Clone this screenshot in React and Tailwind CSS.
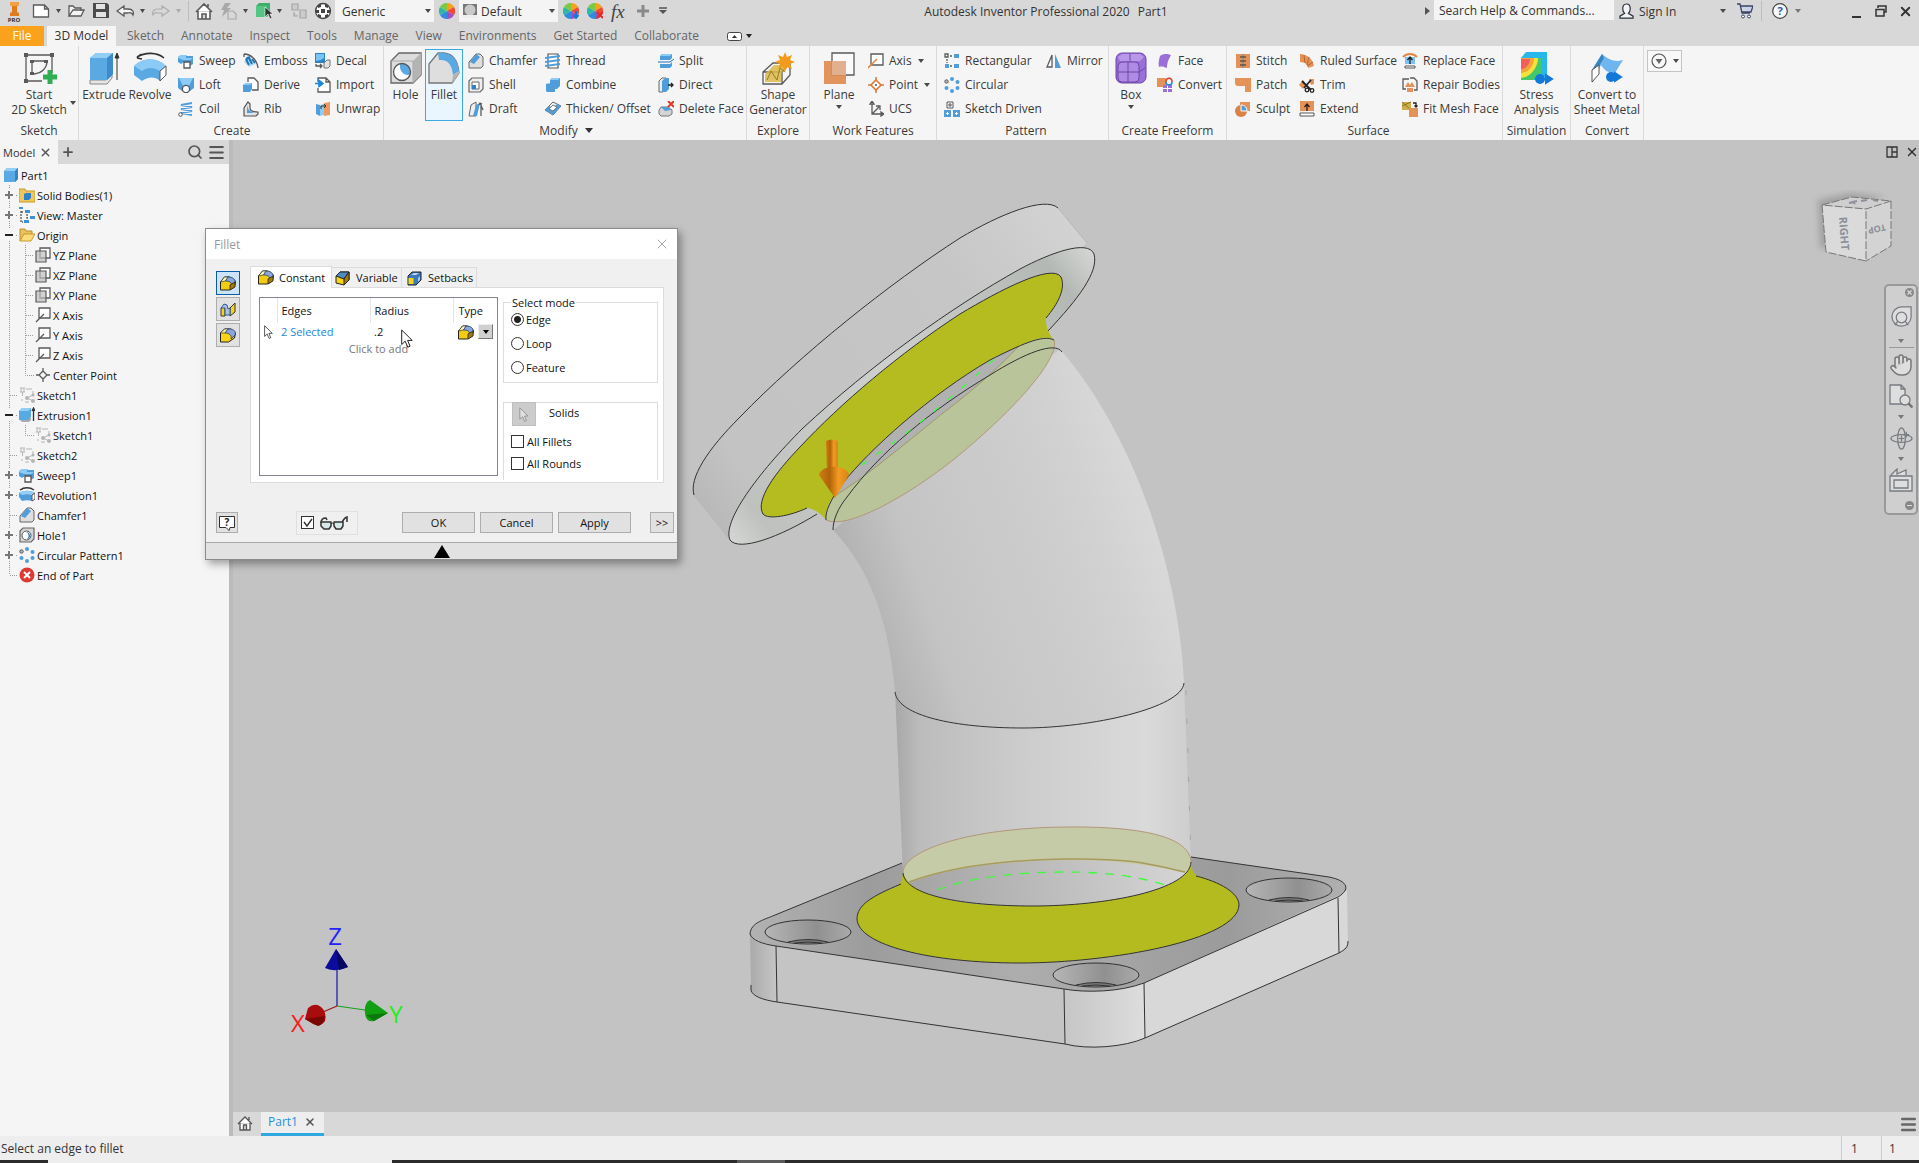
import { useState } from 'react';
import { X, Plus, Search, Menu, Hand } from 'lucide-react';

const line = { fill: 'none', stroke: '#5a5a5a', strokeWidth: 1.3 };

/* 16x16 ribbon and browser icons */
const icons = {
    sweep: (
        <>
            <path d="M0 4l3-2h5l1 1h6v8l-3 2H6v-4l-3 2L0 9z" fill="#4f9edb" />
            <path d="M0 4l3-2h5v3h7l-3 2H5L0 5z" fill="#8ccbf5" />
            <path d="M6 9h6v6H6z" fill="#fff" stroke="#555" strokeWidth="1.3" />
        </>
    ),
    loft: (
        <>
            <path d="M0 1h16v10l-4 3H4L0 11z" fill="#4f9edb" />
            <path d="M1 1h14l-4 8H5z" fill="#8ccbf5" />
            <circle cx="8" cy="12" r="3.6" fill="#fff" stroke="#555" strokeWidth="1.3" />
        </>
    ),
    coil: (
        <>
            <path d="M14 2L3 4l11 2L3 8l11 2L3 12l11 2" fill="none" stroke="#4f9edb" strokeWidth="2" />
            <circle cx="2.5" cy="13.5" r="1.8" fill="#fff" stroke="#555" />
        </>
    ),
    emboss: (
        <>
            <path d="M1 1c7 0 13 6 14 14M1 1v3" {...line} />
            <path d="M1 9l5 5 7-3C11 7 8 4 4 3z" fill="#b9dcf5" />
            <path d="M3 6l3 6M6 5l3 6M9 6l3 4M3 6l4-2" stroke="#1f74b8" strokeWidth="2" fill="none" />
        </>
    ),
    derive: (
        <>
            <path d="M5 5V1h6l4 4v8H9" {...line} fill="#fff" />
            <path d="M0 8l3-2h6v6l-2 3H0z" fill="#4f9edb" />
            <path d="M0 8l3-2h6L7 8z" fill="#8ccbf5" />
        </>
    ),
    rib: (
        <>
            <path d="M1 15V7l4-6 2 2v4c0 3 3 4 8 4v2l-2 2z" fill="#e3e3e3" stroke="#555" strokeWidth="1.2" />
            <path d="M4 4c1 5 3 7 8 8H4z" fill="#4f9edb" />
        </>
    ),
    decal: (
        <>
            <path d="M0 0h10v10H0z" fill="#2f82c8" />
            <path d="M1 1h8v4l-3 2-5 1z" fill="#7cc3f2" />
            <path d="M9 10l3-3h3v6l-2 2H9z" fill="#e3e3e3" stroke="#777" />
            <path d="M1 11v2h6M5 11l2 2-2 2" {...line} />
        </>
    ),
    import: (
        <>
            <path d="M3 5V1h8l4 4v10H3v-4M11 1v4h4" {...line} fill="#fff" />
            <path d="M0 6.5h6M4 3.5l4 3-4 3z" stroke="#1b87d8" strokeWidth="1.6" fill="#1b87d8" />
        </>
    ),
    unwrap: (
        <>
            <path d="M1 3l4 1v11l-4-2z" fill="#4f9edb" />
            <path d="M5 4l4-1v11l-4 1z" fill="#8ccbf5" />
            <path d="M9 2l6-1v13l-6 1z" fill="#ec9a62" />
            <path d="M6 8V5h5M9 3l2 2-2 2" fill="none" stroke="#333" />
        </>
    ),
    chamfer: (
        <>
            <path d="M1 14V9L8 1h4l3 3v9l-2 2H1z" fill="#dedede" stroke="#666" />
            <path d="M2 9l6-8 4 3-6 7z" fill="#4f9edb" />
        </>
    ),
    shell: (
        <>
            <path d="M1 4l3-3h11v11l-3 3H1z" fill="#eee" stroke="#666" strokeWidth="1.2" />
            <path d="M4 5h7v7H4z" fill="#fff" stroke="#666" />
            <path d="M4 8h4v4H4z" fill="#2f82c8" />
        </>
    ),
    draft: (
        <>
            <path d="M1 15l2-11 5-3v14z" fill="#eee" stroke="#666" />
            <path d="M5 15L8 4l4-2-3 13z" fill="#4f9edb" />
            <path d="M13 15V4M15 9l-3-7M11 4l1-2 2 1" {...line} />
        </>
    ),
    thread: (
        <>
            <path d="M3 1h10v14H3z" fill="#fff" stroke="#555" strokeWidth="1.2" />
            <path d="M0 5l15-2M0 9l15-2M0 13l15-2" stroke="#4f9edb" strokeWidth="2" />
        </>
    ),
    combine: (
        <>
            <path d="M5 3l2-2h8v8l-3 3h-2v3H2l-1-1V7h4z" fill="#4f9edb" />
            <path d="M5 3l2-2h8l-2 2zM1 7l2-1h2v1z" fill="#8ccbf5" />
        </>
    ),
    thicken: (
        <>
            <path d="M0 9l8-8 8 4-8 9z" fill="#f4f4f4" stroke="#666" />
            <path d="M0 9l4-4 4 2 4-4 4 2-8 9z" fill="#4f9edb" />
            <path d="M4 8l4-4 4 2-4 4z" fill="#fff" stroke="#777" />
        </>
    ),
    split: (
        <>
            <path d="M2 3l2-2h10v4l-2 2H2z" fill="#4f9edb" />
            <path d="M2 3l2-2h10l-2 2z" fill="#8ccbf5" />
            <path d="M2 11h10l2-2v4l-2 2H2z" fill="#4f9edb" />
            <path d="M0 9h12l4-3" stroke="#2272b3" fill="none" />
        </>
    ),
    direct: (
        <>
            <path d="M1 4l3-3h4v11l-3 3H1z" fill="#eee" stroke="#666" />
            <path d="M4 4l3-3h4v11l-3 3H4z" fill="#4f9edb" />
            <path d="M10 8h5M13 6l2 2-2 2" {...line} stroke="#222" />
        </>
    ),
    deleteFace: (
        <>
            <path d="M1 9l2-3h7l4 3v4l-3 2H3l-2-2z" fill="#d4d4d4" stroke="#777" />
            <path d="M3 6h7l3 3-6 1z" fill="#4f9edb" />
            <path d="M10 0l6 6M16 0l-6 6" stroke="#e03a2c" strokeWidth="2" />
        </>
    ),
    axis: (
        <>
            <path d="M3 1h12v11H3z" {...line} fill="#fff" />
            <path d="M0 15L9 6" stroke="#e08848" strokeWidth="1.6" />
        </>
    ),
    point: (
        <>
            <path d="M8 0v16M0 8h16" stroke="#d87b3c" strokeWidth="1.5" />
            <path d="M8 3l5 5-5 5-5-5z" fill="#fff" stroke="#d87b3c" strokeWidth="1.6" />
            <circle cx="8" cy="8" r="1" fill="#555" />
        </>
    ),
    ucs: <path d="M4 3v10h11M2 3l2-3 2 3zM13 11l3 2-3 2zM4 13l7-7M8 5h4v4" {...line} />,
    rectangular: (
        <>
            <path d="M1 1h3v3H1z" {...line} />
            <path d="M10 1h5v4h-5zM1 11h4v4H1zM10 11h5v4h-5z" fill="#4f9edb" />
            <path d="M6 3h3M3 6v4M6 13h3" {...line} strokeDasharray="2 1" />
        </>
    ),
    circular: (
        <>
            <circle cx="2.5" cy="4.5" r="1.7" fill="#bbb" stroke="#555" />
            <g fill="#4f9edb">
                <circle cx="8" cy="2" r="2" />
                <circle cx="13.5" cy="5" r="2" />
                <circle cx="13.5" cy="11" r="2" />
                <circle cx="8" cy="14" r="2" />
                <circle cx="2.5" cy="11" r="2" />
            </g>
        </>
    ),
    sketchDriven: (
        <>
            <path d="M3 1h6v6H3zM6 2v4M4 4h4" {...line} strokeWidth="1" />
            <path d="M0 9h7v7H0zM9 9h7v7H9z" fill="#4f9edb" />
            <path d="M3.5 11v3M2 12.5h3M12.5 11v3M11 12.5h3" stroke="#fff" />
        </>
    ),
    mirror: (
        <>
            <path d="M6 2v12H1z" {...line} fill="#fff" />
            <path d="M9 1v14h6z" fill="#4f9edb" />
        </>
    ),
    face: <path d="M3 3c4-3 8-2 11-1-2 4-4 7-4 13-3-1-5-2-8-1-1-4 0-7 1-11z" fill="#9a6fd8" />,
    freeConvert: (
        <>
            <path d="M0 1h9v9H0z" fill="#e59258" />
            <path d="M6 8h9v7H6z" fill="#9a6fd8" />
            <path d="M10.5 8v7M6 11.5h9" stroke="#fff" />
            <path d="M9 5c0-5 6-5 6 0" fill="none" stroke="#e03a2c" strokeWidth="1.5" />
            <path d="M9 5c0 4 6 4 6 0" fill="none" stroke="#1b87d8" strokeWidth="1.5" />
        </>
    ),
    stitch: (
        <>
            <path d="M1 1h6v14H1zM9 1h6v14H9z" fill="#e59258" />
            <path d="M8 1v14M5 4h6M5 8h6M5 12h6" stroke="#333" />
        </>
    ),
    patch: <path d="M0 1h16v14h-6V9H3c-2 0-3-1-3-3z" fill="#e59258" />,
    sculpt: (
        <>
            <path d="M5 1h10v9H5z" fill="#e59258" />
            <circle cx="6" cy="10" r="6" fill="#d98246" />
            <path d="M6 4c4 0 6 3 6 6H6z" fill="#4f9edb" stroke="#fff" />
        </>
    ),
    ruled: (
        <>
            <path d="M1 1c7 0 13 5 14 12l-6 2c0-3-3-6-8-6z" fill="#e59258" />
            <path d="M5 2l1 8M10 4l-2 8M14 9l-6 4" stroke="#b96527" fill="none" />
        </>
    ),
    trim: (
        <>
            <path d="M0 8l4-5 3 5-3 4zM10 2h5v5l-3 1z" fill="#e59258" />
            <path d="M3 4l9 9M12 3L5 11" stroke="#222" strokeWidth="1.8" />
            <circle cx="13" cy="13.5" r="1.8" fill="none" stroke="#222" strokeWidth="1.3" />
            <circle cx="8" cy="13" r="1.8" fill="none" stroke="#222" strokeWidth="1.3" />
        </>
    ),
    extend: (
        <>
            <path d="M1 0h14v10H1z" fill="#e59258" />
            <path d="M8 10V4M5.5 6L8 3l2.5 3" {...line} stroke="#222" />
            <path d="M1 12h14v3H1z" fill="#fff" stroke="#555" />
        </>
    ),
    replace: (
        <>
            <path d="M1 4c4-4 10-4 14 0" fill="none" stroke="#e08848" strokeWidth="1.8" />
            <path d="M3 4h10v7H3z" fill="#7cc3f2" />
            <path d="M8 11V5M5.5 7L8 4l2.5 3" {...line} stroke="#222" />
            <path d="M3 13h10v2H3z" fill="#fff" stroke="#555" />
        </>
    ),
    repair: (
        <>
            <path d="M4 12H1V2h6M8 1h4l3 3v9h-3" {...line} />
            <path d="M3 10l3-5 2 3 2-3 3 5zM5 11h6v4H5z" fill="#e59258" />
        </>
    ),
    fitMesh: (
        <>
            <path d="M0 1h9v8H0z" fill="#cfae4e" />
            <path d="M0 1l9 8M9 1L0 5" stroke="#8b7326" fill="none" />
            <path d="M7 7h9v9H7z" fill="#e59258" />
            <path d="M11 2h3v4M12.5 4.5L14 6l1.5-1.5" {...line} stroke="#222" />
        </>
    ),
    part: (
        <>
            <path d="M1 4l3-3h11v11l-3 3H1z" fill="#58a9e4" />
            <path d="M1 4l3-3h11l-3 3z" fill="#93cff5" />
            <path d="M12 4l3-3v11l-3 3z" fill="#3585c2" />
        </>
    ),
    solidFolder: (
        <>
            <path d="M0 2h6l1 2h9v11H0z" fill="#f0c75a" stroke="#c79a2c" />
            <path d="M5 7l2-1h5v5l-2 2H5z" fill="#2f82c8" />
        </>
    ),
    view: (
        <>
            <path d="M0 0h4v2H0zM6 3h5v3H6zM11 9h5v3h-5zM5 13h5v3H5z" fill="#3c92d4" />
            <path d="M2 4v11h2M2 5h3M8 7v4h2" {...line} strokeDasharray="2 1" />
        </>
    ),
    folder: (
        <>
            <path d="M1 14V2h5l1 2h6v3" fill="#e9c05a" stroke="#b98f2c" />
            <path d="M1 14L5 7h11l-4 7z" fill="#fbdc7c" stroke="#c79a2c" />
        </>
    ),
    plane: (
        <>
            <path d="M5 1h10v10H5z" {...line} fill="#fff" />
            <path d="M1 4h10v11H1z" fill="#bdbdbd" fillOpacity="0.7" stroke="#5a5a5a" strokeWidth="1.2" />
        </>
    ),
    treeAxis: (
        <>
            <path d="M4 1h11v10H4z" {...line} fill="#fff" />
            <path d="M1 15l8-8" {...line} />
        </>
    ),
    center: <path d="M8 1v3M8 12v3M1 8h3M12 8h3M8 4l4 4-4 4-4-4z" {...line} />,
    sketch: (
        <g fill="#b5b5b5">
            <path d="M1 1h5M2 1v4M5 1v4M1 5h5M3.5 5v4M7 2h6M14 4v4M3 12v2M6 15h4" fill="none" stroke="#b5b5b5" />
            <circle cx="8" cy="11" r="2" />
            <circle cx="14" cy="8" r="1.5" />
            <circle cx="14" cy="14" r="2" />
            <path d="M8 11l6-3M8 11l6 3" stroke="#b5b5b5" />
        </g>
    ),
    extrusion: (
        <>
            <path d="M1 13l2 2h7l2-2v-2H1z" fill="#aaa" />
            <path d="M0 4l3-3h9v9l-3 3H0z" fill="#58a9e4" />
            <path d="M0 4l3-3h9L9 4z" fill="#93cff5" />
            <path d="M14.5 14V2M13 4l1.5-3L16 4" {...line} stroke="#333" />
        </>
    ),
    revolution: (
        <>
            <path d="M1 3c4-3 10-3 14 0M1 3l3-1" {...line} stroke="#333" />
            <path d="M0 6c5-3 11-3 16 0v6l-3 2c-3-1-7-1-10 0l-3-4z" fill="#4f9edb" />
            <path d="M0 6c5-3 11-3 16 0l-3 2c-3-1-7-1-10 0z" fill="#93cff5" />
            <path d="M13 8l3-2v6l-3 2z" fill="#fff" stroke="#555" />
        </>
    ),
    hole: (
        <>
            <path d="M1 4l3-3h11v11l-3 3H1z" fill="#d6d6d6" stroke="#666" strokeWidth="1.2" />
            <circle cx="7.5" cy="8.5" r="4.5" fill="#fff" stroke="#555" />
            <path d="M7 5a4 4 0 0 1 1 7 3 3 0 0 0 3-4 4 4 0 0 0-4-3z" fill="#2f82c8" />
        </>
    ),
    end: (
        <>
            <circle cx="8" cy="8" r="7.5" fill="#dd3a34" />
            <path d="M5 5l6 6M11 5l-6 6" stroke="#fff" strokeWidth="2" />
        </>
    ),
    filletEdge: (
        <>
            <path d="M0.5 7l4-5h5l5 3 1 2-1 5-5 3h-9z" fill="#f2cc10" stroke="#222" />
            <path d="M0.5 7l4-5h4l-3 4z" fill="#fdf3a8" stroke="#222" strokeWidth="0.6" />
            <path d="M8 2c5 0 7 2 7.500 6l-4 2c0-3-2-4-6-4z" fill="#8aa6dc" stroke="#26406e" strokeWidth="0.8" />
            <path d="M10 15v-5l5-3v5z" fill="#a47c0c" stroke="#222" strokeWidth="0.8" />
        </>
    ),
    filletFace: (
        <>
            <path d="M1 7l4-2v10H1zM10 7l5-5v9l-5 4z" fill="#f7d417" stroke="#333" />
            <path d="M1 7l3-4 3 1 1 4 2-1v7H5V7z" fill="#a9c3e8" stroke="#2c5aa0" />
        </>
    ),
    filletRound: (
        <>
            <path d="M0.5 6l4-4h6l5 4-1 5-6 4h-8z" fill="#f7d417" stroke="#222" />
            <path d="M0.5 6l4-4h4L5 6z" fill="#fdf3a8" stroke="#222" strokeWidth="0.6" />
            <path d="M8 2h3c4 1 5 3 4 6l-4 4c1-4-2-6-6-6z" fill="#8aa6dc" stroke="#26406e" strokeWidth="0.8" />
        </>
    ),
    variable: (
        <>
            <path d="M1 6l4-4h9v8l-5 5-8-2z" fill="#f7d417" stroke="#222" />
            <path d="M1 6l4-4h9L9 9z" fill="#4c8ac4" stroke="#222" />
            <path d="M9 15V9l5-7v8z" fill="#a47c0c" stroke="#222" />
        </>
    ),
    setbacks: (
        <>
            <path d="M1 6l4-4h9v8l-5 5H1z" fill="#3b79bd" stroke="#222" />
            <path d="M4 5l3-2h5L9 5z" fill="#bcd6f2" />
            <path d="M1.5 8h5v6h-5z" fill="#f7d417" />
            <path d="M11 8l2-2v4l-2 2z" fill="#a9c8ea" />
        </>
    ),
};

function Icon({ name, className = 'size-4' }) {
    return (
        <svg viewBox="0 0 16 16" className={`${className} shrink-0`} aria-hidden="true">
            {icons[name]}
        </svg>
    );
}

/* 32x32 icons for the large ribbon buttons */
const bigIcons = {
    startSketch: (
        <>
            <path d="M3 3h26v18M3 3v26h16M9 22V9h15c0 7-5 12-13 13" {...line} />
            <path d="M1 1h4v4H1zM27 1h4v4h-4zM1 27h4v4H1zM7 8h4v3H7zM21 8h4v3h-4zM7 20h4v3H7z" fill="#5a5a5a" />
            <path d="M20 25h14M27 18v14" stroke="#2fae53" strokeWidth="5" />
        </>
    ),
    extrude: (
        <>
            <path d="M2 28h16l6-5v3l-5 6H2z" fill="#e6e6e6" stroke="#888" />
            <path d="M2 6l6-5h17v21l-6 6H2z" fill="#5aa9e3" />
            <path d="M2 6l6-5h17l-6 5z" fill="#93cff5" />
            <path d="M19 6l6-5v21l-6 6z" fill="#3d8cc9" />
            <path d="M29 28V4M27 6l2-5 2 5z" stroke="#333" fill="#333" />
        </>
    ),
    revolve: (
        <>
            <path d="M3 5c8-5 20-5 27 1M3 6l4-4M3 6l5 1" {...line} stroke="#333" strokeWidth="1.6" />
            <path d="M0 14C9 5 23 5 32 14v9l-6 6c-6-5-12-4-18 0l-8-6z" fill="#5aa9e3" />
            <path d="M0 14C9 5 23 5 32 14l-6 5c-6-4-13-4-18 0z" fill="#8ccbf5" />
            <path d="M26 19l6-5v9l-6 6z" fill="#fff" stroke="#555" />
        </>
    ),
    hole: (
        <>
            <path d="M1 9l8-8h22v22l-8 8H1z" fill="#dcdcdc" stroke="#666" strokeWidth="1.3" />
            <path d="M23 9l8-8v22l-8 8z" fill="#b4b4b4" />
            <path d="M1 9h22v22" fill="none" stroke="#aaa" />
            <circle cx="12" cy="20" r="8.5" fill="#5aa9e3" />
            <path d="M10 12a8.5 8.5 0 1 0 10 11c-7 1-11-5-10-11z" fill="#fff" />
            <circle cx="12" cy="20" r="8.5" fill="none" stroke="#555" strokeWidth="1.3" />
        </>
    ),
    fillet: (
        <>
            <path d="M1 12l9-11h6c9 1 14 8 15 20l-7 10H1z" fill="#dedede" stroke="#777" strokeWidth="1.3" />
            <path d="M10 1h6c9 1 14 8 15 18l-6 4C24 13 20 7 11 8z" fill="#5aa9e3" />
            <path d="M25 23l6-4v3l-7 9z" fill="#b5b5b5" />
        </>
    ),
    shape: (
        <>
            <path d="M1 20l10-9h17v12l-8 9H1zM1 20h19v12M20 20l8-9" {...line} />
            <path d="M3 22l9-9h13l-6 9v8H3z" fill="#d9b84a" fillOpacity="0.85" />
            <path d="M5 28l4-9 6 9 3-12 5 4" fill="none" stroke="#9a7a1c" />
            <path d="M23 0l2 5 5-2-2 5 5 2-5 2 2 5-5-2-2 5-2-5-5 2 2-5-5-2 5-2-2-5 5 2z" fill="#f39c1c" />
        </>
    ),
    plane: (
        <>
            <path d="M9 1h22v22H9z" {...line} fill="#fafafa" />
            <path d="M1 9h22v23H1z" fill="#e08a4e" fillOpacity="0.9" />
            <path d="M9 9h14v14H9z" fill="#e2b08e" />
        </>
    ),
    box: (
        <>
            <rect x="1" y="1" width="30" height="30" rx="6" fill="#9a6fd8" stroke="#6c46a8" />
            <path d="M3 5l4-3h18l4 3-4 4H5z" fill="#b998ea" />
            <rect x="3" y="10" width="21" height="20" rx="4" fill="#b08be6" stroke="#6c46a8" />
            <path d="M13 10v20M3 20h21M24 20l6-4M15 2v7" stroke="#6c46a8" fill="none" />
        </>
    ),
    stress: (
        <>
            <path d="M0 6l5-6h21v22l-5 6H0z" fill="#27b7e8" />
            <path d="M0 6h20v16l-8 6H0z" fill="#44c96a" />
            <path d="M0 6h17c0 9-7 19-17 20z" fill="#f4e23a" />
            <path d="M0 6h13c0 8-5 14-13 15z" fill="#f5a23c" />
            <path d="M0 7h9c0 5-4 10-9 10z" fill="#f0605a" />
            <path d="M14 27h14M25 23l6 4-6 4z" stroke="#1379d8" strokeWidth="2" fill="#1379d8" />
            <circle cx="19" cy="27" r="5" fill="#1379d8" />
        </>
    ),
    sheet: (
        <>
            <path d="M1 18L11 2c5 4 9 7 16 7l5-1-8 13c-7 0-11-3-14-8L2 30z" fill="#6fb5ee" />
            <path d="M1 18L11 2l2 4-5 8z" fill="#3585c2" />
            <path d="M1 18l7-5v9l-7 8z" fill="#fff" stroke="#555" />
            <path d="M16 25h11M24 21l6 4-6 4z" stroke="#1379d8" strokeWidth="2" fill="#1379d8" />
            <circle cx="20" cy="25" r="5" fill="#1379d8" />
        </>
    ),
};

function Caret({ className = 'text-[#4a4a4a]' }) {
    return (
        <svg viewBox="0 0 6 4" className={`h-1 w-1.5 shrink-0 ${className}`} aria-hidden="true">
            <path d="M0 0h6L3 4z" fill="currentColor" />
        </svg>
    );
}

function Cursor({ className }) {
    return (
        <svg viewBox="0 0 12 19" className={className} aria-hidden="true">
            <path d="M0.7 1v14.5l3.5-3.3 2.6 6 2.3-1-2.5-5.8h4.6z" fill="#fff" stroke="#222" />
        </svg>
    );
}

function BigButton({ icon, lines, caret, sideCaret, active, className }) {
    return (
        <button
            type="button"
            className={`flex h-[72px] shrink-0 flex-col items-center border pt-[2px] ${active ? 'border-[#3ea8e0] bg-[#eaf6fd]' : 'border-transparent'} ${className}`}
        >
            <svg viewBox="0 0 32 32" className="size-8 shrink-0 overflow-visible" aria-hidden="true">
                {bigIcons[icon]}
            </svg>
            <span className="relative mt-[3px] leading-[15px] whitespace-nowrap">
                {lines.map((l) => (
                    <span key={l} className="block">
                        {l}
                    </span>
                ))}
                {sideCaret && <Caret className="absolute right-[-9px] bottom-[12px] text-[#4a4a4a]" />}
            </span>
            {caret && <Caret className="mt-[3px] text-[#4a4a4a]" />}
        </button>
    );
}

function Column({ items, className }) {
    return (
        <div className={`flex shrink-0 flex-col ${className}`}>
            {items.map(([icon, label, caret]) => (
                <button key={label} type="button" className="flex h-6 items-center gap-[5px] whitespace-nowrap">
                    <Icon name={icon} />
                    <span className="pb-[2px]">{label}</span>
                    {caret && <Caret className="ml-px text-[#4a4a4a]" />}
                </button>
            ))}
        </div>
    );
}

function Panel({ label, caret, className, children }) {
    return (
        <section className={`flex h-full shrink-0 flex-col border-r border-[#dadada] pt-[3px] ${className}`}>
            <div className="flex h-[72px]">{children}</div>
            <div className="flex flex-1 items-center justify-center gap-[7px]">
                {label}
                {caret && (
                    <svg viewBox="0 0 8 5" className="h-[5px] w-2" aria-hidden="true">
                        <path d="M0 0h8L4 5z" fill="#333" />
                    </svg>
                )}
            </div>
        </section>
    );
}

function Wheel({ badge }) {
    return (
        <svg viewBox="0 0 16 16" className="size-4 shrink-0" aria-hidden="true">
            <path d="M8 8V0a8 8 0 0 1 7 4z" fill="#f6a21c" />
            <path d="M8 8l7-4a8 8 0 0 1 0 8z" fill="#ef4a35" />
            <path d="M8 8l7 4a8 8 0 0 1-7 4z" fill="#a34fc0" />
            <path d="M8 8v8a8 8 0 0 1-7-4z" fill="#2f8be0" />
            <path d="M8 8l-7 4a8 8 0 0 1 0-8z" fill="#2cb8a5" />
            <path d="M8 8L1 4a8 8 0 0 1 7-4z" fill="#7ac943" />
            {badge === 'edit' && <path d="M13 8v7M10.5 12l2.5 3 2.5-3" stroke="#1379d8" strokeWidth="2" fill="none" />}
            {badge === 'clear' && <path d="M10 9l6 6M16 9l-6 6" stroke="#e02d22" strokeWidth="2" />}
        </svg>
    );
}

function ToolbarSelect({ label, value, icon, className }) {
    return (
        <div className={`relative flex h-[22px] shrink-0 items-center bg-[#f4f4f4] ${className}`}>
            {icon}
            <select aria-label={label} defaultValue={value} className="h-full flex-1 appearance-none bg-transparent pl-[4px] outline-none">
                <option>{value}</option>
            </select>
            <Caret className="pointer-events-none absolute right-[3px] text-[#4a4a4a]" />
        </div>
    );
}

function TitleBar() {
    return (
        <header className="flex h-[26px] shrink-0 items-start text-[#333]">
            <svg viewBox="0 0 335 26" className="h-[26px] w-[335px] shrink-0" aria-hidden="true">
                <path d="M10 2h9v3l-2 1v6l2 1v3h-9v-3l2-1V6l-2-1z" fill="#e07c1c" />
                <path d="M10 2h9v3l-3 1h-3L10 5z" fill="#f4a044" />
                <text x="14" y="22" fontSize="6" fontWeight="700" textAnchor="middle" fill="#333">PRO</text>
                <path d="M33.5 5h11l4 4v8h-15zM44.5 5v4h4" {...line} fill="#fff" />
                <path d="M69 16V6h4l2 2h6v3M69 16l4-6h11l-3 6z" {...line} fill="#f4f4f4" />
                <path d="M93 3h14l2 2v13H93z" fill="#4c4c4c" />
                <path d="M96 4h9v5h-9zM96 12h10v5H96z" fill="#e4e4e4" />
                <path d="M117 11l7-5v3h4c5 0 6 3 5 6-1-2-3-3-5-2h-4v3z" {...line} fill="#f4f4f4" />
                <path d="M169 11l-7-5v3h-4c-5 0-6 3-5 6 1-2 3-3 5-2h4v3z" fill="none" stroke="#adadad" strokeWidth="1.2" />
                <path d="M56 9h5l-2.5 4zM140 9h5l-2.5 4zM243 9h5l-2.5 4zM277 9h5l-2.5 4z" fill="#4a4a4a" />
                <path d="M176 9h5l-2.5 4z" fill="#aaa" />
                <path d="M188.5 1v20" stroke="#bdbdbd" />
                <path d="M196 12l8-8 8 8M198 11v8h12v-8M202 19v-5h4v5M208 4v3" {...line} strokeWidth="1.6" fill="#fff" />
                <path d="M225 3h6l-4 5h4l-9 9 2-7h-3z" fill="#a9a9a9" />
                <path d="M228 11h5l3 3v5h-8z" fill="none" stroke="#a9a9a9" strokeWidth="1.2" />
                <path d="M256 6l3-3h11v11l-3 3h-11z" fill="#3fae6a" />
                <path d="M256 6h11v11h-11z" fill="#56c483" />
                <path d="M265 7v10l3-3 2 5 2-1-2-4h3z" fill="#333" stroke="#fff" strokeWidth="0.6" />
                <path d="M292 4h6v6h-6zM294 12v4h4M300 10h6v8h-6z" fill="#ccc" stroke="#a5a5a5" strokeWidth="1.2" />
                <circle cx="323" cy="11" r="7.5" fill="#fff" stroke="#444" strokeWidth="1.3" />
                <path d="M321 9h4v4h-4zM318 5l3-1v3l-3 1zM328 5l-3-1v3l3 1zM318 17l3 1v-3l-3-1zM328 17l-3 1v-3l3-1zM316 10h3v3h-3zM327 10h3v3h-3z" fill="#444" />
            </svg>
            <ToolbarSelect label="Material" value="Generic" className="w-[99px] pl-[3px]" />
            <div className="flex h-[22px] w-[25px] shrink-0 items-center justify-center">
                <Wheel />
            </div>
            <ToolbarSelect
                label="Appearance"
                value="Default"
                className="w-[99px] pl-[4px]"
                icon={
                    <svg viewBox="0 0 14 16" className="h-4 w-3.5" aria-hidden="true">
                        <path d="M0 1h14v13H0z" fill="#777" />
                        <circle cx="7" cy="7" r="5.5" fill="#c9c9c9" />
                        <path d="M0 12h14v3H0z" fill="#eee" />
                    </svg>
                }
            />
            <div className="flex h-[22px] shrink-0 items-center gap-[8px] pl-[5px]">
                <Wheel badge="edit" />
                <Wheel badge="clear" />
                <span className="w-4 font-['Liberation_Serif',serif] text-[19px] text-[#444] italic">fx</span>
                <svg viewBox="0 0 12 12" className="ml-[2px] size-3" aria-hidden="true">
                    <path d="M6 0v12M0 6h12" stroke="#8a8a8a" strokeWidth="3" />
                </svg>
                <svg viewBox="0 0 8 8" className="ml-[2px] size-2" aria-hidden="true">
                    <path d="M0 1h8" stroke="#555" strokeWidth="1.5" />
                    <path d="M0 3h8L4 7z" fill="#555" />
                </svg>
            </div>
            <h1 className="flex h-[22px] flex-1 items-center justify-center gap-2 whitespace-nowrap">
                <span>Autodesk Inventor Professional 2020</span>
                <span>Part1</span>
            </h1>
            <div className="flex h-[22px] w-[494px] shrink-0 items-center">
                <svg viewBox="0 0 5 8" className="mr-[4px] h-2 w-[5px]" aria-hidden="true">
                    <path d="M0 0l5 4-5 4z" fill="#555" />
                </svg>
                <input
                    type="text"
                    aria-label="Search Help & Commands"
                    placeholder="Search Help & Commands..."
                    className="h-[20px] w-[180px] self-start bg-[#f4f4f4] px-[5px] outline-none placeholder:text-[#333]"
                />
                <button type="button" className="ml-[5px] flex items-center gap-[5px]">
                    <svg viewBox="0 0 16 18" className="h-[17px] w-[15px]" aria-hidden="true">
                        <path d="M8 1c3 0 4 2 4 5s-1 4-2 5l5 3v2H1v-2l5-3c-1-1-2-2-2-5s1-5 4-5z" fill="#f4f4f4" stroke="#2b3040" strokeWidth="1.3" />
                    </svg>
                    Sign In
                </button>
                <div className="ml-auto flex items-center pr-[6px]">
                    <Caret />
                    <svg viewBox="0 0 16 16" className="ml-[11px] size-4" aria-hidden="true">
                        <path d="M0 1h3l2 9h8M4 3h12l-2 6H5" fill="#c9d2e8" stroke="#3a4568" strokeWidth="1.3" />
                        <circle cx="6" cy="13.5" r="1.5" fill="#fff" stroke="#3a4568" />
                        <circle cx="12" cy="13.5" r="1.5" fill="#fff" stroke="#3a4568" />
                    </svg>
                    <div className="ml-[8px] h-5 w-px bg-[#bdbdbd]" />
                    <svg viewBox="0 0 16 16" className="ml-[10px] size-4" aria-hidden="true">
                        <circle cx="8" cy="8" r="7.3" fill="#f8f8f8" stroke="#444" strokeWidth="1.2" />
                        <text x="8" y="12" fontSize="11" fontWeight="700" textAnchor="middle" fill="#2558b8">?</text>
                    </svg>
                    <Caret className="ml-[7px] text-[#777]" />
                    <button type="button" aria-label="Minimize" className="ml-[51px] flex h-[14px] w-[9px] items-end">
                        <span className="h-[2px] w-full bg-[#333]" />
                    </button>
                    <button type="button" aria-label="Restore" className="ml-[14px]">
                        <svg viewBox="0 0 12 12" className="size-3" aria-hidden="true">
                            <path d="M3 3V1h8v6H9M1 4.5h8V11H1z" fill="none" stroke="#333" strokeWidth="1.5" />
                        </svg>
                    </button>
                    <button type="button" aria-label="Close" className="ml-[11px]">
                        <X size={15} strokeWidth={3} />
                    </button>
                </div>
            </div>
        </header>
    );
}

const tabs = ['Sketch', 'Annotate', 'Inspect', 'Tools', 'Manage', 'View', 'Environments', 'Get Started', 'Collaborate'];

function Tabs() {
    return (
        <nav className="flex h-[20px] shrink-0 items-center text-[#666]">
            <button type="button" className="mr-[3px] h-full w-[44px] bg-[#faa21b] pb-[2px] text-white">
                File
            </button>
            <button type="button" className="mr-[2px] h-full w-[69px] bg-[#f5f5f5] pb-[2px] text-[#333]">
                3D Model
            </button>
            {tabs.map((t) => (
                <button key={t} type="button" className="h-full pr-[8px] pb-[2px] pl-[9px]">
                    {t}
                </button>
            ))}
            <button type="button" aria-label="Minimize ribbon" className="ml-[20px] flex items-center gap-1">
                <svg viewBox="0 0 15 9" className="h-[9px] w-[15px]" aria-hidden="true">
                    <rect x="0.5" y="0.5" width="14" height="8" rx="2" fill="#fff" stroke="#444" />
                    <path d="M5 6h5L7.5 3z" fill="#333" />
                </svg>
                <Caret className="text-[#222]" />
            </button>
        </nav>
    );
}

function Ribbon() {
    return (
        <div className="flex h-[94px] shrink-0 bg-[#f5f5f5] text-[#3a3a3a]">
            <Panel label="Sketch" className="w-[79px]">
                <BigButton icon="startSketch" lines={['Start', '2D Sketch']} sideCaret className="w-[78px]" />
            </Panel>
            <Panel label="Create" className="w-[305px] pl-[2px]">
                <BigButton icon="extrude" lines={['Extrude']} className="w-[46px]" />
                <BigButton icon="revolve" lines={['Revolve']} className="w-[46px]" />
                <Column className="ml-[5px] w-[65px]" items={[['sweep', 'Sweep'], ['loft', 'Loft'], ['coil', 'Coil']]} />
                <Column className="w-[72px]" items={[['emboss', 'Emboss'], ['derive', 'Derive'], ['rib', 'Rib']]} />
                <Column className="w-[66px]" items={[['decal', 'Decal'], ['import', 'Import'], ['unwrap', 'Unwrap']]} />
            </Panel>
            <Panel label="Modify" caret className="w-[363px] pl-[2px]">
                <BigButton icon="hole" lines={['Hole']} className="w-[39px]" />
                <BigButton icon="fillet" lines={['Fillet']} active className="w-[38px]" />
                <Column className="ml-[5px] w-[77px]" items={[['chamfer', 'Chamfer'], ['shell', 'Shell'], ['draft', 'Draft']]} />
                <Column className="w-[113px]" items={[['thread', 'Thread'], ['combine', 'Combine'], ['thicken', 'Thicken/ Offset']]} />
                <Column className="w-[86px]" items={[['split', 'Split'], ['direct', 'Direct'], ['deleteFace', 'Delete Face']]} />
            </Panel>
            <Panel label="Explore" className="w-[63px]">
                <BigButton icon="shape" lines={['Shape', 'Generator']} className="w-[62px]" />
            </Panel>
            <Panel label="Work Features" className="w-[127px]">
                <BigButton icon="plane" lines={['Plane']} caret className="w-[58px]" />
                <Column className="w-[66px]" items={[['axis', 'Axis', true], ['point', 'Point', true], ['ucs', 'UCS']]} />
            </Panel>
            <Panel label="Pattern" className="w-[172px] pl-[7px]">
                <Column className="w-[102px]" items={[['rectangular', 'Rectangular'], ['circular', 'Circular'], ['sketchDriven', 'Sketch Driven']]} />
                <Column className="w-[60px]" items={[['mirror', 'Mirror']]} />
            </Panel>
            <Panel label="Create Freeform" className="w-[118px]">
                <BigButton icon="box" lines={['Box']} caret className="w-[44px]" />
                <Column className="ml-[4px] w-[68px]" items={[['face', 'Face'], ['freeConvert', 'Convert']]} />
            </Panel>
            <Panel label="Surface" className="w-[276px] pl-[8px]">
                <Column className="w-[64px]" items={[['stitch', 'Stitch'], ['patch', 'Patch'], ['sculpt', 'Sculpt']]} />
                <Column className="w-[103px]" items={[['ruled', 'Ruled Surface'], ['trim', 'Trim'], ['extend', 'Extend']]} />
                <Column className="w-[98px]" items={[['replace', 'Replace Face'], ['repair', 'Repair Bodies'], ['fitMesh', 'Fit Mesh Face']]} />
            </Panel>
            <Panel label="Simulation" className="w-[68px]">
                <BigButton icon="stress" lines={['Stress', 'Analysis']} className="w-[67px]" />
            </Panel>
            <Panel label="Convert" className="w-[73px]">
                <BigButton icon="sheet" lines={['Convert to', 'Sheet Metal']} className="w-[72px]" />
            </Panel>
            <button type="button" aria-label="Ribbon options" className="mt-[4px] ml-[3px] flex h-[22px] w-[35px] items-center justify-center gap-1.5 border border-[#c4c4c4] bg-[#f8f8f8]">
                <svg viewBox="0 0 16 16" className="size-4" aria-hidden="true">
                    <circle cx="8" cy="8" r="7" fill="none" stroke="#555" strokeWidth="1.2" />
                    <path d="M4.5 6h7L8 11z" fill="#666" />
                </svg>
                <Caret />
            </button>
        </div>
    );
}

const tree = [
    { level: 1, icon: 'solidFolder', label: 'Solid Bodies(1)', toggle: '+' },
    { level: 1, icon: 'view', label: 'View: Master', toggle: '+' },
    { level: 1, icon: 'folder', label: 'Origin', toggle: '-' },
    { level: 2, icon: 'plane', label: 'YZ Plane' },
    { level: 2, icon: 'plane', label: 'XZ Plane' },
    { level: 2, icon: 'plane', label: 'XY Plane' },
    { level: 2, icon: 'treeAxis', label: 'X Axis' },
    { level: 2, icon: 'treeAxis', label: 'Y Axis' },
    { level: 2, icon: 'treeAxis', label: 'Z Axis' },
    { level: 2, icon: 'center', label: 'Center Point', last: true },
    { level: 1, icon: 'sketch', label: 'Sketch1' },
    { level: 1, icon: 'extrusion', label: 'Extrusion1', toggle: '-' },
    { level: 2, icon: 'sketch', label: 'Sketch1', last: true },
    { level: 1, icon: 'sketch', label: 'Sketch2' },
    { level: 1, icon: 'sweep', label: 'Sweep1', toggle: '+' },
    { level: 1, icon: 'revolution', label: 'Revolution1', toggle: '+' },
    { level: 1, icon: 'chamfer', label: 'Chamfer1' },
    { level: 1, icon: 'hole', label: 'Hole1', toggle: '+' },
    { level: 1, icon: 'circular', label: 'Circular Pattern1', toggle: '+' },
    { level: 1, icon: 'end', label: 'End of Part', last: true },
];

function TreeRow({ level, icon, label, toggle, last }) {
    const dots = { fill: 'none', stroke: '#9a9a9a', strokeDasharray: '1 1' };
    return (
        <li className="flex h-5 items-center">
            <svg viewBox={level === 1 ? '0 0 19 20' : '0 0 35 20'} className={`h-5 shrink-0 ${level === 1 ? 'w-[19px]' : 'w-[35px]'}`} aria-hidden="true">
                <path d={level === 1 && last ? 'M9.5 0v10' : 'M9.5 0v20'} {...dots} />
                {level === 1 && <path d="M10 10.5h8" {...dots} />}
                {level === 2 && <path d={last ? 'M25.5 0v10.5h9' : 'M25.5 0v20M26 10.5h8'} {...dots} />}
                {toggle && <path d="M4 4h11v12H4z" fill="#f5f5f5" />}
                {toggle === '+' && <path d="M5 10h8M9 6v8" stroke="#777" strokeWidth="2" />}
                {toggle === '-' && <path d="M5 10h8" stroke="#222" strokeWidth="2" />}
            </svg>
            <Icon name={icon} />
            <span className="ml-[2px] whitespace-nowrap">{label}</span>
        </li>
    );
}

function ModelBrowser() {
    return (
        <aside className="flex w-[229px] shrink-0 flex-col bg-[#f5f5f5] text-[11px] text-[#111]">
            <div className="flex h-[24px] items-center bg-[#d8d8d8] text-[#555]">
                <div className="flex h-full w-[58px] items-center justify-between bg-[#f5f5f5] pr-[6px] pl-[3px]">
                    <span className="text-[#333]">Model</span>
                    <X size={13} strokeWidth={2.5} />
                </div>
                <Plus size={14} strokeWidth={3} className="ml-[3px]" />
                <Search size={16} strokeWidth={2.5} className="ml-auto" />
                <Menu size={19} strokeWidth={2.5} className="mr-[3px] ml-[4px]" />
            </div>
            <ul className="pt-px">
                <li className="flex h-5 items-center pl-[3px]">
                    <Icon name="part" />
                    <span className="ml-[2px]">Part1</span>
                </li>
                {tree.map((row, i) => (
                    <TreeRow key={i} {...row} />
                ))}
            </ul>
        </aside>
    );
}

function PipeModel() {
    const edge = { fill: 'none', stroke: '#333', strokeWidth: 1 };
    return (
        <svg viewBox="233 140 1686 972" className="absolute inset-0 h-full w-full" role="img" aria-label="Flanged pipe elbow">
            <defs>
                <linearGradient id="rim" x1="694" y1="500" x2="1090" y2="220" gradientUnits="userSpaceOnUse">
                    <stop offset="0" stopColor="#b8b8b8" />
                    <stop offset="0.12" stopColor="#c3c3c3" />
                    <stop offset="0.7" stopColor="#c6c6c6" />
                    <stop offset="1" stopColor="#d4d4d4" />
                </linearGradient>
                <linearGradient id="rimFace" x1="730" y1="540" x2="1095" y2="250" gradientUnits="userSpaceOnUse">
                    <stop offset="0" stopColor="#d4d6d4" />
                    <stop offset="0.08" stopColor="#bfc1bf" />
                    <stop offset="0.5" stopColor="#ced0ce" />
                    <stop offset="0.9" stopColor="#b4b8b4" />
                    <stop offset="1" stopColor="#d6d8d6" />
                </linearGradient>
                <linearGradient id="elbow" x1="860" y1="600" x2="1160" y2="500" gradientUnits="userSpaceOnUse">
                    <stop offset="0" stopColor="#b2b2b2" />
                    <stop offset="0.2" stopColor="#c4c4c4" />
                    <stop offset="0.7" stopColor="#cfcfcf" />
                    <stop offset="1" stopColor="#dadada" />
                </linearGradient>
                <linearGradient id="tube" x1="896" y1="0" x2="1190" y2="0" gradientUnits="userSpaceOnUse">
                    <stop offset="0" stopColor="#a8a8a8" />
                    <stop offset="0.08" stopColor="#bcbcbc" />
                    <stop offset="0.4" stopColor="#cbcbcb" />
                    <stop offset="0.85" stopColor="#dadada" />
                    <stop offset="1" stopColor="#cecece" />
                </linearGradient>
                <linearGradient id="bore" x1="903" y1="900" x2="1190" y2="870" gradientUnits="userSpaceOnUse">
                    <stop offset="0" stopColor="#a2a2a2" />
                    <stop offset="1" stopColor="#d6d6d6" />
                </linearGradient>
                <linearGradient id="baseTop" x1="750" y1="0" x2="1347" y2="0" gradientUnits="userSpaceOnUse">
                    <stop offset="0" stopColor="#b2b2b2" />
                    <stop offset="0.2" stopColor="#9c9c9c" />
                    <stop offset="0.45" stopColor="#adadad" />
                    <stop offset="0.8" stopColor="#9b9b9b" />
                    <stop offset="1" stopColor="#b0b0b0" />
                </linearGradient>
                <linearGradient id="corner" x1="750" y1="0" x2="777" y2="0" gradientUnits="userSpaceOnUse">
                    <stop offset="0" stopColor="#aaaaaa" />
                    <stop offset="1" stopColor="#c6c6c6" />
                </linearGradient>
                <linearGradient id="cornerFront" x1="1064" y1="0" x2="1145" y2="0" gradientUnits="userSpaceOnUse">
                    <stop offset="0" stopColor="#c6c6c6" />
                    <stop offset="1" stopColor="#dddddd" />
                </linearGradient>
                <linearGradient id="holeFill" x1="0" y1="0" x2="1" y2="0">
                    <stop offset="0" stopColor="#b6b6b6" />
                    <stop offset="0.6" stopColor="#909090" />
                    <stop offset="1" stopColor="#aaaaaa" />
                </linearGradient>
                <linearGradient id="arrow" x1="0" y1="0" x2="1" y2="0">
                    <stop offset="0" stopColor="#d07c12" />
                    <stop offset="0.35" stopColor="#b0640a" />
                    <stop offset="0.65" stopColor="#f39a22" />
                    <stop offset="1" stopColor="#d88414" />
                </linearGradient>
            </defs>

            {/* Base plate */}
            <path d="M750 934C751 922 764 920 780 913L903 863 1191 857 1329 877C1345 880 1350 888 1344 893L1144 983C1120 992 1085 993 1063 989L776 946C762 943 752 939 750 934z" fill="url(#baseTop)" />
            <path d="M750 934c2 6 12 10 26 12l1 56c-14-2-25-8-26-13z" fill="url(#corner)" />
            <path d="M776 946l288 43 1 55-288-42z" fill="#c4c4c4" />
            <path d="M1064 989c22 4 56 3 80-6l1 55c-20 9-57 12-80 6z" fill="url(#cornerFront)" />
            <path d="M1144 983l194-86 9-7 1 55-9 8-194 85z" fill="#d8d8d8" />
            <path d="M902 863L780 913C764 920 751 922 750 934c2 6 12 10 26 12l288 43c22 4 56 3 80-6l194-86c12-7 11-16-9-20l-138-20" {...edge} />
            <path d="M751 985v5c1 6 12 10 26 12l288 42c23 6 60 3 80-6l194-85c7-4 9-6 9-12M776 946l1 56M1064 989l1 55M1144 983l1 55M1338 898l1 55" {...edge} />
            {[[808, 932], [1289, 890], [1096, 975]].map(([x, y]) => (
                <g key={x}>
                    <ellipse cx={x} cy={y} rx="43" ry="12" fill="url(#holeFill)" stroke="#333" />
                    <path d={`M${x - 20} ${y + 10}q20 -5 40 0M${x - 14} ${y + 11}q14 -2 28 0`} fill="#777" stroke="#333" />
                </g>
            ))}

            {/* Straight tube and elbow */}
            <path d="M895 690L903 873C905 895 960 906 1033 906S1190 890 1191 862L1184 683z" fill="url(#tube)" />
            <path d="M833 530C860 558 888 605 895 692C898 716 955 728 1023 728S1182 708 1184 683C1178 560 1130 430 1060 349z" fill="url(#elbow)" />
            <path d="M895 692C898 716 955 728 1023 728S1182 708 1184 683" {...edge} />
            <path d="M1186 690l5 170" stroke="#a6a6a6" strokeDasharray="5 24" fill="none" />

            {/* Lower fillet preview */}
            <path d="M903 873C903 850 970 828 1065 827S1190 842 1191 862C1190 890 1110 905 1033 906S905 895 903 873z" fill="url(#bore)" />
            <path d="M903 873C903 850 970 828 1065 827S1190 842 1191 862C1191 866 1188 870 1184 873C1150 864 1110 860 1065 860C1000 861 945 869 909 883C905 880 903 877 903 873z" fill="#c5cba6" />
            <path d="M903 873C903 850 970 828 1065 827S1190 842 1191 862" fill="none" stroke="#b3967c" />
            <path d="M909 882C950 867 1000 860 1065 859S1150 864 1185 872" fill="none" stroke="#a89a5c" strokeWidth="1.5" />
            <path d="M937 890C970 877 1020 872 1065 872S1140 877 1165 885" fill="none" stroke="#3dfc3d" strokeWidth="1.3" strokeDasharray="9 8" />
            <path d="M903 870C903 878 901 884 896 887C872 896 857 905 857 919C858 945 930 963 1020 963S1238 940 1239 905C1239 893 1220 882 1198 876C1193 874 1192 870 1191 862C1190 890 1110 905 1033 906S905 895 903 870z" fill="#b4bb1f" />
            <path d="M901 884C872 896 857 905 857 919C858 945 930 963 1020 963S1238 940 1239 905C1239 893 1220 882 1196 876M903 873C905 895 960 906 1033 906S1190 890 1191 862" {...edge} />

            {/* Upper flange */}
            <path d="M694 495C689 478 707 450 740 417C800 355 890 283 960 238C1000 214 1045 196 1058 208L1087 243L730 540z" fill="url(#rim)" />
            <path d="M694 495C689 478 707 450 740 417C800 355 890 283 960 238C1000 214 1045 196 1058 208" {...edge} />
            <path d="M694 495l36 45M1058 208l29 35" fill="none" stroke="#b6b6b6" />
            <path d="M730 540C722 522 757 474 803 428C870 366 950 308 1020 269C1050 253 1088 239 1094 254C1099 272 1078 299 1048 331L817 514C780 537 739 552 730 540z" fill="url(#rimFace)" />
            <path d="M1048 331C1078 299 1099 272 1094 254C1088 239 1050 253 1020 269C950 308 870 366 803 428C757 474 722 522 730 540C739 552 780 537 817 514" {...edge} />
            <path d="M807 508C790 516 768 520 763 514C755 500 775 473 800 447C840 404 900 353 960 314C1000 290 1052 263 1061 277C1066 288 1058 304 1046 318C1045 326 1049 334 1054 340C1043 334 1020 345 990 360C930 395 870 449 843 483C830 500 825 512 826 520C821 513 814 509 807 508z" fill="#b5bc20" />
            <path d="M826 520C825 512 830 500 843 483C870 449 930 395 990 360C1020 345 1043 334 1054 340C1054 380 980 410 940 430C900 460 860 490 826 520z" fill="#b2b1b2" />
            <path d="M826 520C825 513 827 505 833 497C860 481 900 448 943 413C975 389 1000 366 1018 347C1035 338 1048 335 1054 340C1060 360 1010 414 953 460C905 498 846 530 826 520z" fill="#b9c49a" />
            <path d="M833 497C860 481 900 448 943 413C975 389 1000 366 1018 347" fill="none" stroke="#9f9a62" />
            <path d="M1054 340C1060 360 1010 414 953 460C905 498 846 530 826 520" fill="none" stroke="#b3967c" />
            <path d="M807 508C790 516 768 520 763 514C755 500 775 473 800 447C840 404 900 353 960 314C1000 290 1052 263 1061 277C1066 288 1058 304 1046 318M826 520C825 512 830 500 843 483C870 449 930 395 990 360C1020 345 1043 334 1054 340" {...edge} />
            <path d="M833 530C833 520 838 508 847 497C880 452 930 411 990 375C1025 353 1055 341 1062 352" {...edge} />
            <path d="M993 360C950 400 900 440 858 467" fill="none" stroke="#3dfc3d" strokeWidth="1.3" strokeDasharray="6 12" />

            {/* Direction arrow */}
            <path d="M826 441q6-3 12 0v30h-11z" fill="url(#arrow)" />
            <path d="M819 475c2-11 28-11 30 0l-14 23z" fill="url(#arrow)" />
        </svg>
    );
}

function ViewCube() {
    return (
        <svg viewBox="0 0 84 80" className="absolute top-[50px] right-[22px] h-[80px] w-[84px]" role="img" aria-label="View cube">
            <defs>
                <filter id="cubeShadow">
                    <feGaussianBlur stdDeviation="3" />
                </filter>
            </defs>
            <path d="M5 10l32-7 35 4-32 10 2 40-35 1z" fill="#8a8a8a" opacity="0.6" filter="url(#cubeShadow)" />
            <path d="M9 15l30-8 39 4-25 8z" fill="#cfcfcf" />
            <path d="M9 15l44 4v52l-40-9z" fill="#dadada" />
            <path d="M53 19l25-8v45l-25 15z" fill="#d3d3d3" />
            <path d="M9 15l30-8 39 4-25 8zM9 15l4 47 40 9V19M78 11v45L53 71" fill="none" stroke="#777" strokeDasharray="8 2" />
            <path d="M36 13l8-2M40 11l2 3M48 11l6-1M60 10l5 1" fill="none" stroke="#8b909a" strokeWidth="2" />
            <text transform="translate(26 27) rotate(86)" fontSize="11" fontWeight="700" fill="#8b909a">RIGHT</text>
            <text transform="translate(72 34) rotate(168)" fontSize="9" fontWeight="700" fill="#8b909a">TOP</text>
        </svg>
    );
}

function NavBar() {
    const nav = { fill: '#dedede', stroke: '#777b80', strokeWidth: 1.3 };
    return (
        <div className="absolute top-[144px] right-[1px] flex h-[231px] w-[34px] flex-col items-center rounded-[5px] border-2 border-[#999] bg-[#cfcfcf] text-[#777]">
            <button type="button" aria-label="Close navigation bar" className="mt-[2px] mr-[2px] flex size-[9px] items-center justify-center self-end rounded-full bg-[#888] text-[#ddd]">
                <X size={7} strokeWidth={4} />
            </button>
            <svg viewBox="0 0 24 24" className="mt-[9px] size-[23px]" aria-label="Steering wheel">
                <path d="M12 1h10v11a10 10 0 1 1-10-11z" {...nav} />
                <circle cx="12" cy="12" r="5.5" {...nav} />
                <path d="M8 16l-3 4M16 16l3 4" {...nav} />
            </svg>
            <Caret className="mt-[10px] text-[#777]" />
            <div className="mt-[4px] h-px w-[25px] bg-[#999]" />
            <Hand size={24} strokeWidth={1.5} className="mt-[5px]" fill="#dedede" aria-label="Pan" />
            <svg viewBox="0 0 24 24" className="mt-[7px] size-[24px]" aria-label="Zoom">
                <path d="M1 1h11l4 4v15H1zM12 1v4h4" {...nav} />
                <circle cx="16" cy="16" r="5" {...nav} />
                <path d="M19.5 19.5l4 4" stroke="#777" strokeWidth="2.5" />
            </svg>
            <Caret className="mt-[7px] text-[#777]" />
            <svg viewBox="0 0 24 24" className="mt-[8px] size-[23px]" aria-label="Orbit">
                <ellipse cx="12" cy="12" rx="11" ry="4" {...nav} fill="none" />
                <ellipse cx="12" cy="12" rx="4" ry="11" {...nav} fill="none" />
                <path d="M12 9v6M9 12h6M17 5v6M14 8h6" {...nav} />
            </svg>
            <Caret className="mt-[7px] text-[#777]" />
            <svg viewBox="0 0 24 24" className="mt-[7px] size-[24px]" aria-label="Look at">
                <path d="M1 8h22v15H1zM5 12h14v8H5zM2 7l6-6v5l9-4v5" {...nav} />
            </svg>
            <div className="mt-auto mr-[2px] mb-[3px] flex size-[9px] items-center justify-center self-end rounded-full bg-[#888]">
                <div className="h-px w-[5px] bg-[#ddd]" />
            </div>
        </div>
    );
}

function Triad() {
    return (
        <svg viewBox="0 -20 120 140" className="absolute bottom-[65px] left-[52px] h-[140px] w-[120px]" role="img" aria-label="Axis triad">
            <path d="M52 79V40" stroke="#1414a8" strokeWidth="1.2" />
            <path d="M52 79l28 4" stroke="#17a017" strokeWidth="1.2" />
            <path d="M52 79l-14 6" stroke="#a01414" strokeWidth="1.2" />
            <path d="M51 22l12 18q-12 6-23 1z" fill="#0c0c9c" />
            <path d="M51 22l3 21 9-3z" fill="#070763" />
            <path d="M103 86L89 94q-8 2-9-8t5-13z" fill="#11a011" />
            <path d="M103 86L89 94l-8-6z" fill="#0a780a" />
            <path d="M20 92l3-11q7-6 13-1t4 14q-5 7-12 3z" fill="#a80c0c" />
            <path d="M20 92l13 7q6-2 7-10z" fill="#7a0505" />
            <g fontSize="24" textAnchor="middle">
                <text x="50" y="18" fill="#2222ff">Z</text>
                <text x="13" y="105" fill="#ff1a1a">X</text>
                <text x="111" y="96" fill="#1cf01c">Y</text>
            </g>
        </svg>
    );
}

function PushButton({ children, className = 'w-[73px]' }) {
    return (
        <button type="button" className={`h-[21px] border border-[#adadad] bg-[#e1e1e1] text-[#111] ${className}`}>
            {children}
        </button>
    );
}

const kinds = [
    { id: 'filletEdge', label: 'Edge fillet' },
    { id: 'filletFace', label: 'Face fillet' },
    { id: 'filletRound', label: 'Full round fillet' },
];

function FilletDialog() {
    const [mode, setMode] = useState('Edge');
    const [kind, setKind] = useState('filletEdge');

    return (
        <div className="absolute top-[228px] left-[205px] w-[473px] border border-[#8c8c8c] bg-[#f0f0f0] text-[11px] text-[#111] shadow-[3px_4px_8px_rgba(0,0,0,0.35)]" role="dialog" aria-label="Fillet">
            <div className="flex h-[30px] items-center justify-between bg-white pr-[7px] pl-[8px] text-[12px] text-[#999]">
                <span>Fillet</span>
                <button type="button" aria-label="Close dialog">
                    <X size={16} strokeWidth={1.3} />
                </button>
            </div>

            <div className="flex h-[224px] pt-[6px] pl-[10px]">
                {/* Fillet kind */}
                <div className="flex w-[34px] flex-col gap-[2px] pt-[6px]">
                    {kinds.map((k) => (
                        <button
                            key={k.id}
                            type="button"
                            aria-label={k.label}
                            onClick={() => setKind(k.id)}
                            className={`flex size-6 items-center justify-center border ${kind === k.id ? 'border-[#0a5ba8] bg-[#cce4f7]' : 'border-[#adadad] bg-[#e1e1e1]'}`}
                        >
                            <Icon name={k.id} />
                        </button>
                    ))}
                </div>

                <div className="flex w-[414px] flex-col">
                    <div className="z-10 flex h-[22px] items-end">
                        <button type="button" className="-mb-px flex h-[22px] w-[82px] items-center gap-[5px] border border-b-0 border-[#dcdcdc] bg-white pb-px pl-[7px]">
                            <Icon name="filletEdge" />
                            Constant
                        </button>
                        <button type="button" className="flex h-[20px] w-[70px] items-center gap-[5px] border border-b-0 border-l-0 border-[#dcdcdc] pl-[3px]">
                            <Icon name="variable" />
                            Variable
                        </button>
                        <button type="button" className="flex h-[20px] w-[75px] items-center gap-[5px] border border-b-0 border-l-0 border-[#dcdcdc] pl-[5px]">
                            <Icon name="setbacks" />
                            Setbacks
                        </button>
                    </div>
                    <div className="flex h-[196px] gap-[5px] border border-[#dcdcdc] bg-white pt-[9px] pl-[8px]">
                        <div className="relative h-[179px] w-[239px] border border-[#828790]">
                            <table className="w-full table-fixed text-left">
                                <colgroup>
                                    <col className="w-[17px]" />
                                    <col className="w-[93px]" />
                                    <col className="w-[83px]" />
                                    <col />
                                </colgroup>
                                <thead>
                                    <tr className="h-[25px]">
                                        <th className="border-r border-[#e5e5e5]" aria-label="State" />
                                        <th className="border-r border-[#e5e5e5] pl-[4px] font-normal">Edges</th>
                                        <th className="border-r border-[#e5e5e5] pl-[4px] font-normal">Radius</th>
                                        <th className="pl-[5px] font-normal">Type</th>
                                    </tr>
                                </thead>
                                <tbody>
                                    <tr className="h-[17px]">
                                        <td>
                                            <Cursor className="ml-[4px] h-[14px] w-[9px]" />
                                        </td>
                                        <td className="pl-[4px] text-[#1a87e0]">2 Selected</td>
                                        <td className="pl-[4px]">
                                            <input type="text" aria-label="Radius" defaultValue=".2" className="block h-[15px] w-[24px] outline-none" />
                                        </td>
                                        <td className="pl-[5px]">
                                            <div className="flex items-center gap-[4px]">
                                                <Icon name="filletEdge" />
                                                <button type="button" aria-label="Fillet type" aria-haspopup="listbox" className="flex size-[15px] items-center justify-center border border-[#777] border-t-[#eee] border-l-[#eee] bg-[#d0d0d0]">
                                                    <Caret className="text-black" />
                                                </button>
                                            </div>
                                        </td>
                                    </tr>
                                    <tr className="h-[17px] text-center text-[#777]">
                                        <td colSpan="4">Click to add</td>
                                    </tr>
                                </tbody>
                            </table>
                            <Cursor className="absolute top-[31px] left-[141px] h-[19px] w-[12px]" />
                        </div>

                        <div className="w-[155px]">
                            <fieldset className="h-[86px] border border-[#dcdcdc] px-[7px]">
                                <legend className="-my-[1px] h-[11px] px-px leading-[11px]">Select mode</legend>
                                {['Edge', 'Loop', 'Feature'].map((m) => (
                                    <label key={m} className="flex h-[24px] items-center gap-[2px]">
                                        <input
                                            type="radio"
                                            name="mode"
                                            checked={mode === m}
                                            onChange={() => setMode(m)}
                                            className="size-[13px] appearance-none rounded-full border border-[#333] bg-white checked:bg-[radial-gradient(circle,#222_0_3px,white_4px)]"
                                        />
                                        {m}
                                    </label>
                                ))}
                            </fieldset>
                            <div className="mt-[19px] h-[78px] border border-b-0 border-[#dcdcdc] pl-[7px]">
                                <div className="flex items-start gap-[13px]">
                                    <button type="button" disabled aria-label="Select solids" className="-mt-px ml-px flex size-6 items-center justify-center border border-[#bfbfbf] bg-[#ccc]">
                                        <Cursor className="h-[15px] w-[10px] opacity-40" />
                                    </button>
                                    <span className="pt-[2px]">Solids</span>
                                </div>
                                {['All Fillets', 'All Rounds'].map((l) => (
                                    <label key={l} className="flex h-[22px] items-center gap-[3px] pt-[9px]">
                                        <input type="checkbox" className="size-[13px] appearance-none border border-[#333] bg-white" />
                                        {l}
                                    </label>
                                ))}
                            </div>
                        </div>
                    </div>
                </div>
            </div>

            <div className="flex h-[59px] items-center pt-[20px] pr-[3px] pl-[10px]">
                <button type="button" aria-label="Help" className="flex h-[21px] w-[22px] items-center justify-center border border-[#adadad] bg-[#e1e1e1]">
                    <svg viewBox="0 0 16 16" className="size-4" aria-hidden="true">
                        <path d="M0.5 1.5h15v11H11l-1 3-3-3H0.5z" fill="#fff" stroke="#333" />
                        <text x="8" y="11" fontSize="10" fontWeight="700" textAnchor="middle" fill="#222">?</text>
                    </svg>
                </button>
                <label className="ml-[58px] flex h-6 w-[62px] items-center gap-[6px] border border-[#e0e0e0] pl-[4px]">
                    <span className="relative flex">
                        <input type="checkbox" defaultChecked aria-label="Preview" className="peer size-[13px] appearance-none border border-[#333] bg-white" />
                        <svg viewBox="0 0 13 13" className="pointer-events-none absolute inset-0 hidden size-[13px] peer-checked:block" aria-hidden="true">
                            <path d="M3 6l3 4 5-7" fill="none" stroke="#333" strokeWidth="1.4" />
                        </svg>
                    </span>
                    <svg viewBox="0 0 28 14" className="h-[14px] w-7" aria-hidden="true">
                        <path d="M1 7c0-3 2-5 5-5l1 2M22 7c1-3 2-5 5-6v5" fill="none" stroke="#333" strokeWidth="1.5" />
                        <path d="M1 6h10v4l-2 3H4l-3-3zM14 6h9v4l-2 3h-5l-2-3z" fill="#d7e8e8" stroke="#333" strokeWidth="1.5" strokeLinejoin="round" />
                        <path d="M11 8q1-2 3 0" fill="none" stroke="#333" />
                    </svg>
                </label>
                <div className="ml-auto flex items-center gap-[5px]">
                    <PushButton>OK</PushButton>
                    <PushButton>Cancel</PushButton>
                    <PushButton>Apply</PushButton>
                    <PushButton className="ml-[14px] w-6">&gt;&gt;</PushButton>
                </div>
            </div>
            <div className="flex h-[17px] items-center justify-center border-t border-[#a8a8a8] bg-[#e2e2e2]">
                <svg viewBox="0 0 16 13" className="h-[13px] w-4" aria-hidden="true">
                    <path d="M8 0l8 13H0z" fill="#000" />
                </svg>
            </div>
        </div>
    );
}

export default function App() {
    return (
        <div className="flex h-screen min-w-0 flex-col overflow-hidden bg-[#d8d8d8] font-['Open_Sans','Noto_Sans',sans-serif] text-[12px] leading-[15px]">
            <TitleBar />
            <Tabs />
            <Ribbon />
            <div className="flex min-h-0 flex-1">
                <ModelBrowser />
                <div className="w-[4px] shrink-0 bg-[#bbb]" />
                <div className="flex min-w-0 flex-1 flex-col">
                    <main className="relative min-h-0 flex-1 overflow-hidden bg-[#c3c3c3]">
                        <PipeModel />
                        <div className="absolute top-[5px] right-0 flex items-center gap-[7px] text-[#333]">
                            <svg viewBox="0 0 12 12" className="size-3" aria-hidden="true">
                                <path d="M1 1h10v10H1zM6 1v10M6 6h5" fill="none" stroke="#333" strokeWidth="1.3" />
                            </svg>
                            <X size={14} strokeWidth={2.5} />
                        </div>
                        <ViewCube />
                        <NavBar />
                        <Triad />
                    </main>
                    <div className="flex h-[24px] shrink-0 items-center">
                        <svg viewBox="0 0 16 16" className="mb-[3px] ml-[4px] size-4" aria-hidden="true">
                            <path d="M1 9l7-7 7 7M3 8v7h10V8M6.5 15v-5h3v5M12 2v3" fill="#fff" stroke="#555" strokeWidth="1.3" />
                        </svg>
                        <button type="button" className="ml-[8px] flex h-full w-[63px] items-center gap-[6px] border-b-[3px] border-[#2fa8df] bg-[#eee] pb-[2px] pl-[7px] text-[#1e90d8]">
                            Part1
                            <X size={12} strokeWidth={3} className="text-[#555]" />
                        </button>
                        <Menu size={19} strokeWidth={3} className="mr-[1px] ml-auto text-[#666]" />
                    </div>
                </div>
            </div>
            <footer className="flex h-[24px] shrink-0 items-center bg-[#eee] pl-px text-[#333]">
                <span>Select an edge to fillet</span>
                <span className="ml-auto flex h-full w-[40px] items-center border-l border-[#ccc] pl-[9px]">1</span>
                <span className="flex h-full w-[38px] items-center border-l border-[#ccc] pl-[7px]">1</span>
            </footer>
            <div className="flex h-[3px] shrink-0 bg-[#2b2b2b]">
                <div className="ml-[48px] w-[344px] bg-[#eee]" />
                <div className="ml-[345px] w-[48px] bg-[#5a5a5a]" />
            </div>
            <FilletDialog />
        </div>
    );
}
